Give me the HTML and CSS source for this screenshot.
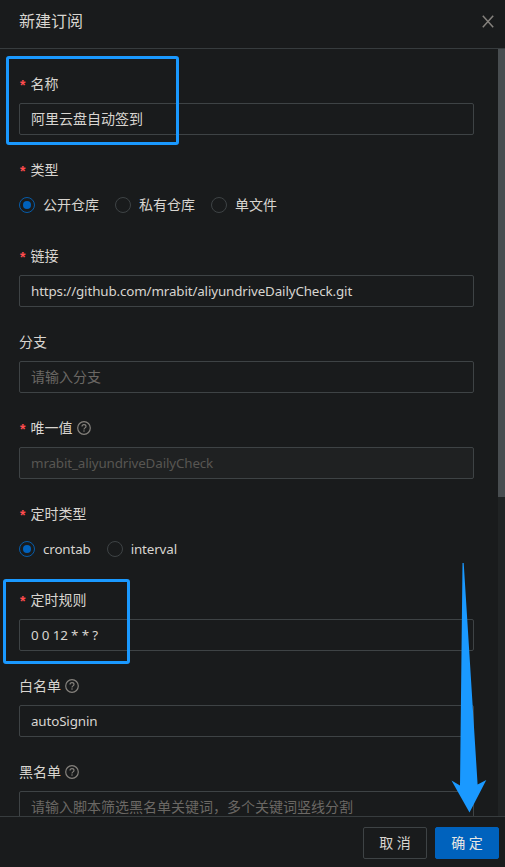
FILE: index.html
```html
<!DOCTYPE html>
<html lang="zh-CN">
<head>
<meta charset="utf-8">
<title>新建订阅</title>
<link rel="stylesheet" href="styles.css">
</head>
<body>
<svg width="0" height="0" class="defs">
  <symbol id="help" viewBox="0 0 14 14">
    <circle cx="7" cy="7" r="6.3" fill="none" stroke="currentColor" stroke-width="1.2"/>
    <path d="M5 5.6C5 4.3 5.9 3.6 7 3.6s2 .7 2 1.8c0 1.5-2 1.5-2 3" fill="none" stroke="currentColor" stroke-width="1.15"/>
    <circle cx="7" cy="10.1" r=".75" fill="currentColor"/>
  </symbol>
</svg>
<div class="drawer">
  <header class="header">
    <h1 class="title">新建订阅</h1>
    <svg class="close" viewBox="0 0 12 13"><path d="M.8.7 11.2 12.3M11.2.7.8 12.3" fill="none" stroke="currentColor" stroke-width="1.5"/></svg>
  </header>
  <main class="body">
    <form class="form">
      <div class="item"><div class="label required">名称</div><div class="input">阿里云盘自动签到</div></div>
      <div class="item">
        <div class="label required">类型</div>
        <div class="radios">
          <label class="radio"><span class="dot checked"></span>公开仓库</label>
          <label class="radio"><span class="dot"></span>私有仓库</label>
          <label class="radio"><span class="dot"></span>单文件</label>
        </div>
      </div>
      <div class="item"><div class="label required">链接</div><div class="input"><span class="latin">https://github.com/mrabit/aliyundriveDailyCheck.git</span></div></div>
      <div class="item"><div class="label">分支</div><div class="input placeholder">请输入分支</div></div>
      <div class="item"><div class="label required">唯一值<svg class="help"><use href="#help"/></svg></div><div class="input disabled"><span class="latin">mrabit_aliyundriveDailyCheck</span></div></div>
      <div class="item">
        <div class="label required">定时类型</div>
        <div class="radios">
          <label class="radio"><span class="dot checked"></span><span class="latin">crontab</span></label>
          <label class="radio"><span class="dot"></span><span class="latin">interval</span></label>
        </div>
      </div>
      <div class="item"><div class="label required">定时规则</div><div class="input"><span class="latin">0 0 12 * * ?</span></div></div>
      <div class="item"><div class="label">白名单<svg class="help"><use href="#help"/></svg></div><div class="input"><span class="latin">autoSignin</span></div></div>
      <div class="item"><div class="label">黑名单<svg class="help"><use href="#help"/></svg></div><div class="input placeholder">请输入脚本筛选黑名单关键词，多个关键词竖线分割</div></div>
    </form>
    <div class="track"><div class="thumb"></div></div>
  </main>
  <footer class="footer">
    <button class="btn">取 消</button>
    <button class="btn primary">确 定</button>
  </footer>
  <div class="mark mark-name"></div>
  <div class="mark mark-cron"></div>
  <svg class="arrow" viewBox="0 0 36 251"><path d="M11.5 0h1.2L26.6 221.5l8.7-4.5L18.5 249.5.5 217.5l8.5 5Z" fill="#1a99ff"/></svg>
</div>
</body>
</html>
```
FILE: styles.css
```css
* { box-sizing: border-box; }
body {
  margin: 0;
  background: #191b1c;
  color: #d8d5d0;
  font: 14px/22px "Noto Sans", "Noto Sans CJK SC", sans-serif;
}
.defs { position: absolute; }
.drawer {
  position: relative;
  display: flex;
  flex-direction: column;
  height: 867px;
  overflow: hidden;
}
.header {
  display: flex;
  flex: 0 0 49px;
  align-items: center;
  justify-content: space-between;
  padding: 0 11px 6px 19px;
  border-bottom: 1px solid #373c3e;
}
.title { margin: 0; padding-bottom: 2px; font: 16px/22px "Noto Sans CJK SC", sans-serif; }
.close { width: 12px; height: 13px; color: #85827d; }
.body { display: flex; flex: 1; min-height: 0; overflow: hidden; }
.form { flex: 1; padding: 24px 24px 0 19px; }
.track { width: 7px; background: #202324; }
.thumb { height: 448px; background: #484d50; }
.item { margin-bottom: 24px; }
.label {
  display: flex;
  align-items: center;
  height: 22px;
  margin-bottom: 8px;
  font-family: "Noto Sans CJK SC", sans-serif;
  line-height: 20px;
  padding-bottom: 2px;
}
.required::before {
  content: "*";
  width: 10.5px;
  color: #ff4d4f;
  font: bold 14px/20px "Liberation Sans", sans-serif;
  padding: 4px 0 0 1px;
}
.help { width: 14px; height: 14px; margin: 2px 0 0 4px; color: #85827d; }
.latin { font-size: 13.4px; letter-spacing: -.14px; }
.input {
  display: flex;
  align-items: center;
  height: 32px;
  padding: 0 11px;
  border: 1px solid #3e4345;
  border-radius: 2px;
  white-space: pre;
}
.placeholder { color: #6b6864; }
.disabled { background: #1f2122; color: #585652; }
.radios { display: flex; gap: 16px; height: 32px; padding-top: 5px; align-items: flex-start; }
.radio { display: flex; align-items: center; gap: 8px; height: 22px; }
.dot { display: flex; width: 16px; height: 16px; border: 1px solid #3e4345; border-radius: 50%; }
.checked { border-color: #075ca8; }
.checked::before { content: ""; width: 8px; height: 8px; margin: auto; border-radius: 50%; background: #0062bd; }
.footer {
  display: flex;
  flex: 0 0 51px;
  justify-content: flex-end;
  gap: 8px;
  padding: 10px 6px 8px;
  border-top: 1px solid #373c3e;
}
.btn {
  width: 64px;
  height: 32px;
  padding: 0;
  border: 1px solid #3e4345;
  border-radius: 2px;
  background: transparent;
  color: #d8d5d0;
  font: 14px/22px "Noto Sans", "Noto Sans CJK SC", sans-serif;
}
.primary { border-color: #0062bd; background: #0062bd; color: #e8e6e3; }
.mark { position: absolute; border: 3px solid #1a99ff; border-radius: 3px; }
.mark-name { left: 6px; top: 56px; width: 173px; height: 89px; }
.mark-cron { left: 3px; top: 579px; width: 127px; height: 85px; }
.arrow { position: absolute; left: 451px; top: 563px; width: 36px; height: 251px; }
```
